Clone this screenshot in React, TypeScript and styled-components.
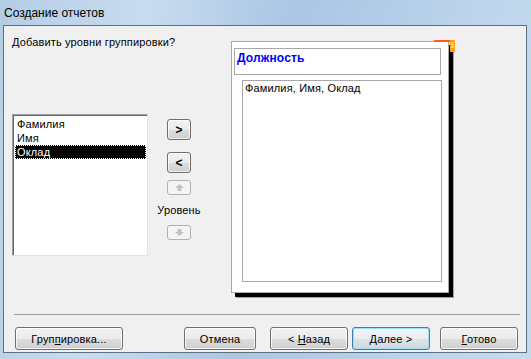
import * as React from 'react'
import styled, { createGlobalStyle } from 'styled-components'

const GlobalStyle = createGlobalStyle`
  html, body {
    margin: 0;
    padding: 0;
    background: #ffffff;
  }
  body {
    font-family: 'Liberation Sans', Arial, sans-serif;
    font-size: 11px;
    letter-spacing: 0.15px;
    color: #000;
  }
`

const SWindow = styled.div`
  width: 531px;
  height: 359px;
  display: flex;
  flex-direction: column;
  background: linear-gradient(100deg, #b4cde6 0%, #c9dcef 25%, #a9c6e4 50%, #bcd4ec 80%, #c7dbee 100%);
  overflow: hidden;
`
const STitleBar = styled.div`
  height: 25px;
  flex: none;
  display: flex;
  align-items: center;
  padding-left: 4px;
  font-size: 12px;
  letter-spacing: 0;
  color: #000;
`
const SClient = styled.div`
  flex: 1;
  margin: 0 4px 6px 3px;
  border: 1px solid #5f6f80;
  background: #f0f0f0;
  display: flex;
  flex-direction: column;
`
const SBody = styled.div`
  flex: 1;
  display: flex;
  align-items: flex-start;
`
const SLeftCol = styled.div`
  margin-left: 8px;
  width: 136px;
  flex: none;
`
const SHeading = styled.div`
  margin-top: 10px;
  line-height: 13px;
  white-space: nowrap;
`
const SListBox = styled.div`
  margin-top: 65px;
  height: 142px;
  box-sizing: border-box;
  background: #fff;
  border: 1px solid;
  border-color: #a0a0a0 #e3e3e3 #e3e3e3 #a0a0a0;
  box-shadow: inset 1px 1px 0 #696969;
  padding: 2px 1px 0 2px;
`
const SListItem = styled.div<{ $selected?: boolean }>`
  height: 14px;
  line-height: 14px;
  padding-left: 2px;
  box-sizing: border-box;
  background: ${p => (p.$selected ? '#000' : 'transparent')};
  color: ${p => (p.$selected ? '#fff' : '#000')};
  outline: ${p => (p.$selected ? '1px dotted #fff' : 'none')};
  outline-offset: -1px;
`
const SArrowCol = styled.div`
  margin-left: 9px;
  margin-top: 93px;
  width: 44px;
  flex: none;
  display: flex;
  flex-direction: column;
  align-items: center;
`
const SSmallButton = styled.div<{ $disabled?: boolean; $top?: number }>`
  width: 24px;
  height: ${p => (p.$disabled ? '15px' : '21px')};
  margin-top: ${p => p.$top || 0}px;
  box-sizing: border-box;
  border: 1px solid ${p => (p.$disabled ? '#adb2b5' : '#707070')};
  border-radius: 3px;
  background: ${p =>
    p.$disabled
      ? '#f4f4f4'
      : 'linear-gradient(#f2f2f2 0%, #ebebeb 50%, #dddddd 51%, #cfcfcf 100%)'};
  box-shadow: inset 0 0 0 1px ${p => (p.$disabled ? '#f4f4f4' : 'rgba(255,255,255,0.7)')};
  display: flex;
  align-items: center;
  justify-content: center;
  font-size: 12px;
  font-weight: bold;
`
const SLevelLabel = styled.div`
  line-height: 13px;
  margin: 9px 0 8px;
`
const SPreview = styled.div`
  position: relative;
  margin-left: 30px;
  margin-top: 15px;
  width: 218px;
  height: 252px;
  box-sizing: border-box;
  flex: none;
  background: #fff;
  border: 1px solid #a8a8a8;
  box-shadow: 4px 4px 0 0 #000, 5px 5px 0 0 #a0a0a0;
  padding: 6px 7px 0 2px;
`
const SCorner = styled.svg`
  position: absolute;
  left: 202px;
  top: -2px;
  width: 22px;
  height: 13px;
`
const SGroupHeader = styled.div`
  height: 27px;
  box-sizing: border-box;
  border: 1px solid #a8a8a8;
  padding: 2px 0 0 2px;
  color: #0000ff;
  font-weight: bold;
  font-size: 12px;
  line-height: 14px;
`
const SDetail = styled.div`
  margin: 5px -1px 0 8px;
  height: 202px;
  box-sizing: border-box;
  border: 1px solid #a8a8a8;
  padding: 1px 0 0 2px;
  line-height: 13px;
`
const SFooter = styled.div`
  flex: none;
  padding: 0 6px 2px 10px;
`
const SSeparator = styled.div`
  height: 1px;
  background: #a0a0a0;
`
const SButtonRow = styled.div`
  margin-top: 12px;
  margin-left: 1px;
  margin-right: 2px;
  display: flex;
  align-items: center;
`
const SButton = styled.div<{ $width: number; $focused?: boolean; $gap?: number }>`
  width: ${p => p.$width}px;
  height: 23px;
  margin-left: ${p => p.$gap || 0}px;
  box-sizing: border-box;
  border: 1px solid ${p => (p.$focused ? '#3c7fb1' : '#707070')};
  border-radius: 3px;
  background: ${p =>
    p.$focused
      ? 'linear-gradient(#f3f6f8 0%, #eaeef1 50%, #dde3e7 51%, #d2d9de 100%)'
      : 'linear-gradient(#f2f2f2 0%, #ebebeb 50%, #dddddd 51%, #cfcfcf 100%)'};
  box-shadow: inset 0 0 0 1px ${p => (p.$focused ? '#9ee0f7' : 'rgba(255,255,255,0.75)')};
  display: flex;
  align-items: center;
  justify-content: center;
  white-space: pre;
  flex: none;
`
const SSpacer = styled.div`
  flex: 1;
`

const ArrowIcon = ({ up }: { up?: boolean }) => (
  <svg width="9" height="7" viewBox="0 0 9 7">
    <path
      d={up ? 'M4.5 0 L9 4 L6.5 4 L6.5 7 L2.5 7 L2.5 4 L0 4 Z' : 'M4.5 7 L9 3 L6.5 3 L6.5 0 L2.5 0 L2.5 3 L0 3 Z'}
      fill="#c2c2c2"
    />
  </svg>
)

const App = () => {
  return (
    <SWindow>
      <GlobalStyle />
      <STitleBar>Создание отчетов</STitleBar>
      <SClient>
        <SBody>
          <SLeftCol>
            <SHeading>Добавить уровни группировки?</SHeading>
            <SListBox>
              <SListItem>Фамилия</SListItem>
              <SListItem>Имя</SListItem>
              <SListItem $selected>Оклад</SListItem>
            </SListBox>
          </SLeftCol>
          <SArrowCol>
            <SSmallButton>&gt;</SSmallButton>
            <SSmallButton $top={12}>&lt;</SSmallButton>
            <SSmallButton $disabled $top={7}>
              <ArrowIcon up />
            </SSmallButton>
            <SLevelLabel>Уровень</SLevelLabel>
            <SSmallButton $disabled>
              <ArrowIcon />
            </SSmallButton>
          </SArrowCol>
          <SPreview>
            <SCorner viewBox="0 0 22 13">
              <rect x="0" y="0" width="21" height="2" fill="#ff5a1a" />
              <rect x="16" y="0" width="5" height="12" fill="#ff9a1a" />
              <rect x="17" y="2" width="3" height="6" fill="#ffd23a" />
            </SCorner>
            <SGroupHeader>Должность</SGroupHeader>
            <SDetail>Фамилия, Имя, Оклад</SDetail>
          </SPreview>
        </SBody>
        <SFooter>
          <SSeparator />
          <SButtonRow>
            <SButton $width={108}>
              <span>Груп<u>п</u>ировка...</span>
            </SButton>
            <SSpacer />
            <SButton $width={72}>Отмена</SButton>
            <SButton $width={78} $gap={14}>
              <span>&lt; <u>Н</u>азад</span>
            </SButton>
            <SButton $width={78} $gap={4} $focused>
              <span><u>Д</u>алее &gt;</span>
            </SButton>
            <SButton $width={78} $gap={10}>
              <span><u>Г</u>отово</span>
            </SButton>
          </SButtonRow>
        </SFooter>
      </SClient>
    </SWindow>
  )
}

export default App
